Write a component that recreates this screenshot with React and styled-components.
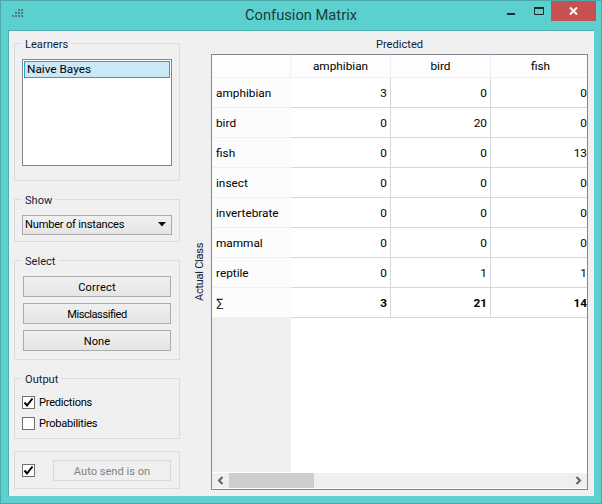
import React from "react";
import styled, { createGlobalStyle } from "styled-components";

const Global = createGlobalStyle`
  html, body { margin: 0; padding: 0; background: #5ccfcf; }
  * { box-sizing: border-box; }
`;
const Win = styled.div`
  width: 602px; height: 504px; background: #5ccfcf; border: 1px solid #4da9a9;
  display: flex; flex-direction: column; overflow: hidden;
  font-family: Roboto, "Open Sans", "Liberation Sans", sans-serif; font-size: 11.8px; color: #000;
`;
const TitleBar = styled.div`
  height: 29px; flex: none; display: grid; grid-template-columns: 1fr auto 1fr; align-items: start;
`;
const AppIcon = styled.svg`
  display: block; margin: 8px 0 0 11px;
`;
const Title = styled.div`
  font-size: 14.7px; line-height: 29px; color: #1a3c3c;
`;
const Controls = styled.div`
  display: flex; justify-self: end; margin-right: 5px; height: 20px;
`;
const Ctrl = styled.div`
  width: ${p => p.$w}px; height: 20px; display: flex; align-items: center; justify-content: center;
  background: ${p => p.$bg || "transparent"};
`;
const Panel = styled.div`
  flex: 1; margin: 0 7px 7px 7px; background: #f0f0f0; border-top: 1px solid #4eaeae; border-left: 1px solid #4eaeae;
  display: flex; padding: 12px 6px 6px 5px; min-height: 0;
`;
const Side = styled.div`
  width: 166px; flex: none; display: flex; flex-direction: column; font-size: 11.1px;
`;
const Group = styled.div`
  height: ${p => p.$h}px; margin-bottom: ${p => p.$mb ?? 18}px; flex: none;
  border: 1px solid #dcdcdc; padding: 0 7px;
`;
const Legend = styled.div`
  width: fit-content; height: 14px; line-height: 14px; margin: -7px 0 0 0; padding: 1px 3px 0; background: #f0f0f0; color: #10203a;
`;
const ListBox = styled.div`
  height: 107px; margin-top: 8px; background: #fff; border: 1px solid #828790; padding: 1px;
`;
const ListItem = styled.div`
  height: 17px; line-height: 15px; background: #cbe8f6; border: 1px solid #26a0da; padding-left: 2px; font-size: 11.8px;
`;
const Combo = styled.div`
  height: 20px; margin-top: 8px; border: 1px solid #acacac; background: linear-gradient(#f0f0f0, #e5e5e5);
  display: flex; align-items: center; justify-content: space-between; padding: 0 5px 1px 2px; letter-spacing: -0.2px;
`;
const Btn = styled.div`
  height: 21px; margin: ${p => p.$mt ?? 6}px 1px 0; border: 1px solid ${p => p.$off ? "#d9d9d9" : "#acacac"};
  background: ${p => p.$off ? "#efefef" : "linear-gradient(#f0f0f0, #e5e5e5)"};
  color: ${p => p.$off ? "#838383" : "#000"};
  letter-spacing: ${p => p.$ls || 0}px;
  padding-top: 1px;
  display: flex; align-items: center; justify-content: center;
`;
const CheckRow = styled.div`
  display: flex; align-items: center; gap: 4px; height: 13px; margin-top: ${p => p.$mt}px;
`;
const CheckText = styled.span`
  letter-spacing: -0.25px; margin-top: -1px;
`;
const Box = styled.div`
  width: 13px; height: 13px; flex: none; background: #fff; border: 1px solid #707070;
  display: flex; align-items: center; justify-content: center;
`;
const AutoRow = styled.div`
  display: flex; align-items: center; height: 100%; justify-content: space-between;
`;
const AutoBtn = styled(Btn)`
  width: 118px; margin: 1px 1px 0 18px; flex: none;
`;
const Main = styled.div`
  flex: 1; margin-left: 13px; display: grid; grid-template-columns: 18px 377px; grid-template-rows: 17px 436px; margin-top: -6px; font-size: 11.1px;
`;
const Predicted = styled.div`
  grid-column: 2; text-align: center; line-height: 14px; padding-top: 1px; color: #10203a;
`;
const Actual = styled.div`
  grid-row: 2; writing-mode: vertical-rl; transform: rotate(180deg); text-align: center; line-height: 15px; justify-self: start; color: #10203a; height: 436px; padding-top: 1px; margin-left: -1px; letter-spacing: -0.3px;
`;
const TableFrame = styled.div`
  grid-column: 2; grid-row: 2; border: 1px solid #828790; display: flex; flex-direction: column; background: #fff; overflow: hidden; font-size: 11.8px;
`;
const Viewport = styled.div`
  flex: 1; display: flex; flex-direction: column; overflow: hidden; min-height: 0;
`;
const Row = styled.div`
  display: grid; grid-template-columns: 79px 100px 100px 100px; height: ${p => p.$h || 30}px; flex: none; width: 379px;
`;
const Corner = styled.div`
  background: #fdfdfd; border-right: 1px solid #f0f4f8; border-bottom: 1px solid #eef3f9;
`;
const ColHead = styled.div`
  background: #fdfdfd; border-right: 1px solid #e8f1fb; border-bottom: 1px solid #e8f1fb;
  display: flex; align-items: center; justify-content: center;
`;
const RowHead = styled.div`
  background: #fcfcfc; border-bottom: 1px solid #f1f1f1; display: flex; align-items: center; padding-left: 4px;
`;
const Cell = styled.div`
  background: #fff; border-right: 1px solid #d8d8d8; border-bottom: 1px solid #d8d8d8;
  display: flex; align-items: center; justify-content: flex-end; padding: 0 3px 0 0; font-weight: ${p => p.$b ? 700 : 400};
`;
const Filler = styled.div`
  flex: 1; width: 79px; background: #efefef; margin-bottom: 1px;
`;
const ScrollBar = styled.div`
  height: 15px; flex: none; background: #efefef; display: flex; align-items: center; margin-bottom: 1px;
`;
const ScrollBtn = styled.div`
  width: 17px; height: 15px; flex: none; display: flex; align-items: center; justify-content: center;
`;
const Track = styled.div`
  flex: 1; height: 15px;
`;
const Thumb = styled.div`
  width: 85px; height: 15px; background: #cdcdcd;
`;

const Check = () => (
  <svg width="11" height="11" viewBox="0 0 11 11"><path d="M1.5 5.5 L4 8.5 L9.5 1.5" fill="none" stroke="#000" strokeWidth="2" /></svg>
);
const dots = [[6,0],[9,0],[3,3],[6,3],[9,3],[0,6],[3,6],[6,6],[9,6]];
const data = [
  ["amphibian", 3, 0, 0], ["bird", 0, 20, 0], ["fish", 0, 0, 13], ["insect", 0, 0, 0],
  ["invertebrate", 0, 0, 0], ["mammal", 0, 0, 0], ["reptile", 0, 1, 1],
];

export default function App() {
  return (
    <Win>
      <Global />
      <TitleBar>
        <AppIcon width="12" height="10" viewBox="0 0 12 10">
          {dots.map(([x, y], i) => <rect key={i} x={x} y={y} width="2" height="2" fill="#55797a" />)}
        </AppIcon>
        <Title>Confusion Matrix</Title>
        <Controls>
          <Ctrl $w={30}><svg width="9" height="20" viewBox="0 0 9 20"><rect y="12" width="8" height="2" fill="#1b2b2b" /></svg></Ctrl>
          <Ctrl $w={25}><svg width="10" height="20" viewBox="0 0 10 20"><path d="M0.5 6.5H9.5V13.5H0.5Z" fill="none" stroke="#1b2b2b" /><rect y="6" width="10" height="2" fill="#1b2b2b" /></svg></Ctrl>
          <Ctrl $w={45} $bg="#c75050"><svg width="9" height="8" viewBox="0 0 9 8"><path d="M1 0.5 L8 7.5 M8 0.5 L1 7.5" stroke="#fff" strokeWidth="2" /></svg></Ctrl>
        </Controls>
      </TitleBar>
      <Panel>
        <Side>
          <Group $h={138}>
            <Legend>Learners</Legend>
            <ListBox><ListItem>Naive Bayes</ListItem></ListBox>
          </Group>
          <Group $h={43}>
            <Legend>Show</Legend>
            <Combo>
              <span>Number of instances</span>
              <svg width="8" height="5" viewBox="0 0 8 5"><path d="M0 0H8L4 4.5Z" fill="#111" /></svg>
            </Combo>
          </Group>
          <Group $h={100}>
            <Legend>Select</Legend>
            <Btn $mt={8} $ls={0.2}>Correct</Btn>
            <Btn $ls={-0.45}>Misclassified</Btn>
            <Btn>None</Btn>
          </Group>
          <Group $h={61} $mb={12}>
            <Legend>Output</Legend>
            <CheckRow $mt={10}><Box><Check /></Box><CheckText>Predictions</CheckText></CheckRow>
            <CheckRow $mt={8}><Box /><CheckText>Probabilities</CheckText></CheckRow>
          </Group>
          <Group $h={38} $mb={0}>
            <AutoRow>
              <Box><Check /></Box>
              <AutoBtn $off>Auto send is on</AutoBtn>
            </AutoRow>
          </Group>
        </Side>
        <Main>
          <Predicted>Predicted</Predicted>
          <Actual>Actual Class</Actual>
          <TableFrame>
            <Viewport>
              <Row $h={23}>
                <Corner />
                <ColHead>amphibian</ColHead>
                <ColHead>bird</ColHead>
                <ColHead>fish</ColHead>
              </Row>
              {data.map(([name, a, b, c]) => (
                <Row key={name}>
                  <RowHead>{name}</RowHead>
                  <Cell>{a}</Cell>
                  <Cell>{b}</Cell>
                  <Cell>{c}</Cell>
                </Row>
              ))}
              <Row>
                <RowHead>∑</RowHead>
                <Cell $b>3</Cell>
                <Cell $b>21</Cell>
                <Cell $b>14</Cell>
              </Row>
              <Filler />
            </Viewport>
            <ScrollBar>
              <ScrollBtn><svg width="7" height="9" viewBox="0 0 7 9"><path d="M5.5 1 L2 4.5 L5.5 8" fill="none" stroke="#606060" strokeWidth="2" /></svg></ScrollBtn>
              <Thumb />
              <Track />
              <ScrollBtn><svg width="7" height="9" viewBox="0 0 7 9"><path d="M1.5 1 L5 4.5 L1.5 8" fill="none" stroke="#606060" strokeWidth="2" /></svg></ScrollBtn>
            </ScrollBar>
          </TableFrame>
        </Main>
      </Panel>
    </Win>
  );
}
